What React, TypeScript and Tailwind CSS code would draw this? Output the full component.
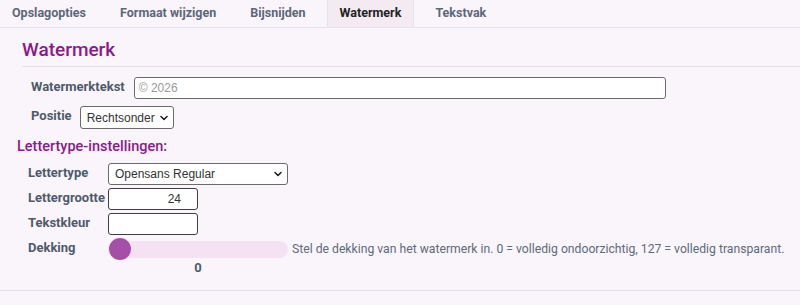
import React from 'react'

const TABS = ['Opslagopties', 'Formaat wijzigen', 'Bijsnijden', 'Watermerk', 'Tekstvak']

function Chevron() {
  return (
    <svg width="10" height="10" viewBox="0 0 10 10" className="shrink-0">
      <path d="M2 3.5 L5 6.5 L8 3.5" fill="none" stroke="#222" strokeWidth="1.6" strokeLinecap="round" strokeLinejoin="round" />
    </svg>
  )
}

export default function App() {
  const font = { fontFamily: 'Roboto, "Liberation Sans", sans-serif' }
  const inputFont = { fontFamily: '"Liberation Sans", Arial, sans-serif' }

  return (
    <div className="w-[800px] h-[305px] bg-[#f9f5fa] overflow-hidden" style={font}>
      <div className="flex h-[28px] border-b border-[#e4e4ec] gap-[10px]">
        {TABS.map((tab) => {
          const active = tab === 'Watermerk'
          return (
            <div
              key={tab}
              className={`px-3 flex items-center text-[12.5px] font-bold ${
                active
                  ? 'bg-[#f3eaf2] text-[#222] border-x border-[#e6e3ea] -mx-px'
                  : 'text-[#5c6779]'
              }`}
            >
              {tab}
            </div>
          )
        })}
      </div>

      <div className="ml-[22px] mt-[11px] border-b border-[#e2e2e8] pb-[5px]">
        <h2 className="text-[19px] leading-[22px] font-medium text-[#8a1a8c]">Watermerk</h2>
      </div>

      <div className="pl-[31px] mt-[10px] flex items-center gap-[9px] h-[22px]">
        <span className="text-[13px] font-bold text-[#4f5a6b] -mt-[3px]">Watermerktekst</span>
        <div
          className="w-[532px] h-[22px] bg-white border border-[#6b6b6b] rounded-[3px] px-[4px] flex items-center text-[12px] text-[#9a9a9a]"
          style={inputFont}
        >
          © 2026
        </div>
      </div>

      <div className="pl-[31px] mt-[7px] flex items-center gap-[8px] h-[23px]">
        <span className="text-[13px] font-bold text-[#4f5a6b] -mt-[4px]">Positie</span>
        <div
          className="w-[94px] h-[23px] bg-white border border-[#6b6b6b] rounded-[3px] pl-[6px] pr-[4px] flex items-center justify-between text-[12px] text-[#333]"
          style={inputFont}
        >
          <span>Rechtsonder</span>
          <Chevron />
        </div>
      </div>

      <div className="pl-[17px] mt-[9px] text-[14.5px] leading-[18px] font-medium text-[#8a1a8c]">
        Lettertype-instellingen:
      </div>

      <div className="pl-[28px] mt-[7px] flex flex-col gap-[3px]">
        <div className="flex items-center h-[22px]">
          <span className="w-[80px] text-[13px] font-bold text-[#4f5a6b] -mt-[2px]">Lettertype</span>
          <div
            className="w-[180px] h-[22px] bg-white border border-[#6b6b6b] rounded-[3px] pl-[6px] pr-[4px] flex items-center justify-between text-[12px] text-[#333]"
            style={inputFont}
          >
            <span>Opensans Regular</span>
            <Chevron />
          </div>
        </div>

        <div className="flex items-center h-[22px]">
          <span className="w-[80px] text-[13px] font-bold text-[#4f5a6b] -mt-[2px] whitespace-nowrap">Lettergrootte</span>
          <div
            className="w-[90px] h-[22px] bg-white border border-[#3f3f3f] rounded-[3px] pr-[16px] flex items-center justify-end text-[12px] text-[#333]"
            style={inputFont}
          >
            24
          </div>
        </div>

        <div className="flex items-center h-[22px]">
          <span className="w-[80px] text-[13px] font-bold text-[#4f5a6b] -mt-[2px]">Tekstkleur</span>
          <div className="w-[90px] h-[22px] bg-white border border-[#3f3f3f] rounded-[3px]" />
        </div>

        <div className="flex items-center h-[22px]">
          <span className="w-[80px] text-[13px] font-bold text-[#4f5a6b] -mt-[2px]">Dekking</span>
          <div className="relative w-[180px] h-[17px] rounded-full bg-[#f4e2f2]">
            <div className="absolute left-[1px] top-1/2 -translate-y-1/2 w-[22px] h-[22px] rounded-full bg-[#a54fa7]" />
          </div>
          <span className="ml-[4px] text-[12.2px] text-[#5f6a7c] whitespace-nowrap">
            Stel de dekking van het watermerk in. 0 = volledig ondoorzichtig, 127 = volledig transparant.
          </span>
        </div>

        <div className="w-[260px] flex -mt-[2px]">
          <span className="ml-[80px] w-[180px] text-center text-[13px] leading-[14px] font-bold text-[#4f5a6b]">0</span>
        </div>
      </div>

      <div className="mt-[15px] border-b border-[#dde2ee]" />
    </div>
  )
}
